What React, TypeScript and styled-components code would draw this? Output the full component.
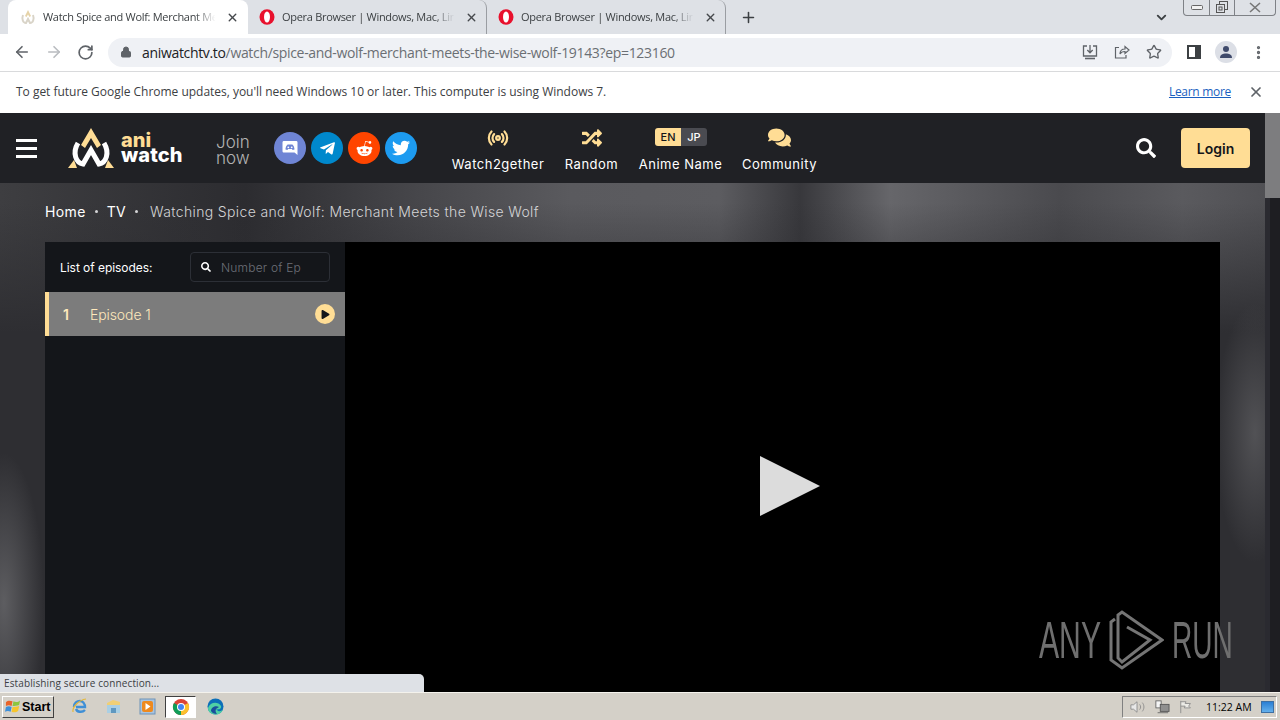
import styled, { createGlobalStyle } from 'styled-components';
import { ArrowLeft, ArrowRight, RotateCw, Lock, X, Plus, ChevronDown, Star, MoreVertical, Radio } from 'lucide-react';
import { FaTelegramPlane, FaRedditAlien, FaTwitter, FaSearch, FaRandom, FaComments, FaPlay } from 'react-icons/fa';

const chromeFont = `'Open Sans', 'Noto Sans', sans-serif`;
const siteFont = `'Inter', 'Open Sans', sans-serif`;

const GlobalStyle = createGlobalStyle`
  html, body {
    margin: 0;
    padding: 0;
    width: 1280px;
    height: 720px;
    overflow: hidden;
    background: #3b3b3f;
  }
  * { box-sizing: border-box; }
`;

function App() {
  return (
    <Screen>
      <GlobalStyle />
      <TabStrip>
        <Tab $active>
          <TabIcon viewBox="0 0 16 16">
            <path d="M8 1 L11 7 L9.500 8 L8 5.500 L6.500 8 L5 7 Z" fill="#e6d3a8" />
            <path d="M3 6 C1.500 10 3 14 6 14 L8 10 L10 14 C13 14 14.500 10 13 6" fill="none" stroke="#d9d4c8" strokeWidth="2" />
          </TabIcon>
          <TabTitle>Watch Spice and Wolf: Merchant Me</TabTitle>
          <TabClose><X size={13} strokeWidth={2.6} /></TabClose>
        </Tab>
        <Tab>
          <OperaIcon />
          <TabTitle>Opera Browser | Windows, Mac, Linu</TabTitle>
          <TabClose><X size={13} strokeWidth={2.6} /></TabClose>
        </Tab>
        <Tab>
          <OperaIcon />
          <TabTitle>Opera Browser | Windows, Mac, Linu</TabTitle>
          <TabClose><X size={13} strokeWidth={2.6} /></TabClose>
        </Tab>
        <NewTab><Plus size={17} strokeWidth={2.2} /></NewTab>
        <TabStripEnd>
          <ChevronDown size={15} strokeWidth={3} color="#3c4043" />
          <WindowButtons>
            <WindowButton $width={25}>
              <svg width="12" height="6" viewBox="0 0 12 6"><rect x="0.5" y="0.5" width="11" height="4" rx="1" fill="#f2f2f2" stroke="#666" /></svg>
            </WindowButton>
            <WindowButton $width={25}>
              <svg width="13" height="13" viewBox="0 0 13 13" fill="none" stroke="#555"><rect x="3.5" y="0.5" width="8" height="8" /><rect x="0.5" y="3.5" width="8" height="8" fill="#dee1e6" /><rect x="3" y="6" width="3" height="3" /></svg>
            </WindowButton>
            <WindowButton $width={41}>
              <svg width="12" height="11" viewBox="0 0 12 11" fill="none" stroke="#777" strokeWidth="1.6"><path d="M1 1 L11 10 M11 1 L1 10" /></svg>
            </WindowButton>
          </WindowButtons>
        </TabStripEnd>
      </TabStrip>

      <Toolbar>
        <NavIcons>
          <ArrowLeft size={18} strokeWidth={2.2} color="#5f6368" />
          <ArrowRight size={18} strokeWidth={2.2} color="#b9bcc0" />
          <RotateCw size={17} strokeWidth={2.4} color="#5f6368" />
        </NavIcons>
        <Omnibox>
          <Lock size={12} fill="#5f6368" color="#5f6368" />
          <Url>
            <b>aniwatchtv.to</b>/watch/spice-and-wolf-merchant-meets-the-wise-wolf-19143?ep=123160
          </Url>
          <OmniActions>
            <svg width="16" height="16" viewBox="0 0 16 16" fill="none" stroke="#5f6368" strokeWidth="1.3">
              <path d="M5 2 H1.5 V12 H14.5 V2 H11 M8 1 V8.5 M5.3 6 L8 8.8 L10.7 6" />
              <path d="M3 14.5 H13" strokeWidth="1.6" />
            </svg>
            <svg width="16" height="16" viewBox="0 0 16 16" fill="none" stroke="#5f6368" strokeWidth="1.2">
              <path d="M5 3.5 H1.5 V14 H12 V11 M6 10 C6 7 8 5 11 5 V2.5 L15 6 L11 9.5 V7.5 C9 7.5 7 8 6 10 Z" />
            </svg>
            <Star size={16} strokeWidth={2} color="#5f6368" />
          </OmniActions>
        </Omnibox>
        <ToolbarRight>
          <SidePanelIcon />
          <Avatar>
            <svg width="14" height="14" viewBox="0 0 14 14" fill="#3f4a6b">
              <circle cx="7" cy="4" r="3" />
              <path d="M1 13 C1 9.5 4 8.5 7 8.5 C10 8.5 13 9.5 13 13 Z" />
            </svg>
          </Avatar>
          <MoreVertical size={17} strokeWidth={2.6} color="#5f6368" />
        </ToolbarRight>
      </Toolbar>

      <InfoBar>
        <InfoText>To get future Google Chrome updates, you'll need Windows 10 or later. This computer is using Windows 7.</InfoText>
        <LearnMore>Learn more</LearnMore>
        <X size={16} strokeWidth={2.6} color="#5f6368" />
      </InfoBar>

      <Page>
        <PageColumn>
          <SiteHeader>
            <Burger><span /><span /><span /></Burger>
            <Logo>
              <svg width="46" height="40" viewBox="0 0 46 40">
                <path d="M23 0 L33 17 L29 20 L23 10 L17 20 L13 17 Z" fill="#ffdd95" />
                <path d="M0 40 L6 32 L9 40 Z M37 40 L40 32 L46 40 Z" fill="#ffdd95" />
                <path d="M10 15 C4 25 8 35 15 36 L23 22 L31 36 C38 35 42 25 36 15" fill="none" stroke="#fff" strokeWidth="5" />
              </svg>
              <LogoWords>
                <span>ani</span>
                <strong>watch</strong>
              </LogoWords>
            </Logo>
            <JoinNow>Join<br />now</JoinNow>
            <Socials>
              <Social $bg="#6f85d5">
                <svg width="16" height="16" viewBox="0 0 16 16">
                  <path d="M2 1 H14 C15 1 15.500 1.500 15.500 2.500 V15 L12.500 12.500 H2 C1 12.500 0.500 12 0.500 11 V2.500 C0.500 1.500 1 1 2 1 Z" fill="#fff" />
                  <path d="M3.500 9.500 C3.500 7 5 4.500 6 4.500 H10 C11 4.500 12.500 7 12.500 9.500 L10.500 10 L10 9 H6 L5.500 10 Z" fill="#6f85d5" />
                  <circle cx="6.300" cy="7.300" r="0.900" fill="#fff" />
                  <circle cx="9.700" cy="7.300" r="0.900" fill="#fff" />
                </svg>
              </Social>
              <Social $bg="#0088cc"><FaTelegramPlane size={17} /></Social>
              <Social $bg="#ff4500"><FaRedditAlien size={17} /></Social>
              <Social $bg="#1d9bf0"><FaTwitter size={18} /></Social>
            </Socials>
            <HeaderNav>
              <NavItem $width={92}><NavGlyph><Radio size={22} strokeWidth={2.4} /></NavGlyph>Watch2gether</NavItem>
              <NavItem $width={55}><NavGlyph><FaRandom size={20} /></NavGlyph>Random</NavItem>
              <NavItem $width={83}>
                <NavGlyph>
                  <LangSwitch><LangOption $on>EN</LangOption><LangOption>JP</LangOption></LangSwitch>
                </NavGlyph>
                Anime Name
              </NavItem>
              <NavItem $width={75}><NavGlyph><FaComments size={23} /></NavGlyph>Community</NavItem>
            </HeaderNav>
            <HeaderRight>
              <FaSearch size={20} color="#fff" />
              <LoginButton>Login</LoginButton>
            </HeaderRight>
          </SiteHeader>

          <Main>
            <Breadcrumb>
              <Crumb>Home</Crumb>
              <Dot />
              <Crumb>TV</Crumb>
              <Dot />
              <CrumbCurrent>Watching Spice and Wolf: Merchant Meets the Wise Wolf</CrumbCurrent>
            </Breadcrumb>
            <Player>
              <EpisodeList>
                <ListHead>
                  <ListTitle>List of episodes:</ListTitle>
                  <EpisodeSearch>
                    <FaSearch size={10} color="#fff" />
                    <span>Number of Ep</span>
                  </EpisodeSearch>
                </ListHead>
                <EpisodeRow>
                  <EpisodeNumber>1</EpisodeNumber>
                  <EpisodeName>Episode 1</EpisodeName>
                  <EpisodePlay><FaPlay size={9} color="#14161a" /></EpisodePlay>
                </EpisodeRow>
              </EpisodeList>
              <Video>
                <svg width="60" height="60" viewBox="0 0 60 60"><path d="M0 0 L60 30 L0 60 Z" fill="#dcdcdc" /></svg>
              </Video>
            </Player>
          </Main>
        </PageColumn>
        <ScrollBar><ScrollThumb /></ScrollBar>

        <Watermark>
          <WatermarkWord $scale={0.58}>ANY</WatermarkWord>
          <svg width="55" height="60" viewBox="0 0 55 60" fill="none" stroke="#757575" strokeWidth="3">
            <path d="M6 9 L2 12 V50 L13 58 L53 30 L13 2 L9 5 V48 L13 52 L41 30 L18 17" />
          </svg>
          <WatermarkWord $scale={0.54}>RUN</WatermarkWord>
        </Watermark>
        <StatusBubble>Establishing secure connection...</StatusBubble>
      </Page>

      <Taskbar>
        <StartButton>
          <svg width="16" height="15" viewBox="0 0 17 15">
            <path d="M1 3 C3 1 5 1 8 2 L7 7 C5 6 3 6 1 7 Z" fill="#e8632a" />
            <path d="M9 2 C11 3 14 3 16 1 L15 6 C13 7 10 7 8 7 Z" fill="#8cc63f" />
            <path d="M1 8 C3 7 5 7 7 8 L6 13 C4 12 2 12 0 13 Z" fill="#3c8fd9" />
            <path d="M8 8 C10 8 13 8 15 7 L14 12 C12 14 9 14 7 13 Z" fill="#f7c52c" />
          </svg>
          Start
        </StartButton>
        <QuickLaunch>
          <TaskIcon>
            <svg width="17" height="17" viewBox="0 0 17 17" fill="none">
              <path d="M3 9 C3 5 6 3 9 3 C12 3 14 6 14 9 H5 M5 11 C6 14 11 15 14 12" stroke="#3f8fd6" strokeWidth="2.4" />
              <path d="M2 14 C1 9 8 2 15 1" stroke="#e4b83a" strokeWidth="1.2" />
            </svg>
          </TaskIcon>
          <TaskIcon>
            <svg width="17" height="17" viewBox="0 0 17 17">
              <path d="M2 5 L8 2 L15 4 V7 H2 Z" fill="#f0cf74" />
              <rect x="2" y="7" width="13" height="8" fill="#a9cfe4" />
              <rect x="6" y="10" width="5" height="5" fill="#5f98c0" />
            </svg>
          </TaskIcon>
          <TaskIcon>
            <svg width="17" height="17" viewBox="0 0 17 17">
              <rect x="1" y="1" width="15" height="15" fill="#a8c4e0" stroke="#6e93b8" />
              <rect x="3" y="3" width="11" height="11" rx="2" fill="#ee8a1f" />
              <path d="M6.5 5 L11.5 8.5 L6.5 12 Z" fill="#fff" />
            </svg>
          </TaskIcon>
          <ActiveTask>
            <svg width="18" height="18" viewBox="0 0 18 18">
              <circle cx="9" cy="9" r="8" fill="#db4437" />
              <path d="M9 9 L16 5 A8 8 0 0 1 9 17 Z" fill="#fbc02d" />
              <path d="M9 9 L9 17 A8 8 0 0 1 2 5 Z" fill="#0f9d58" />
              <circle cx="9" cy="9" r="4" fill="#fff" />
              <circle cx="9" cy="9" r="3" fill="#4285f4" />
            </svg>
          </ActiveTask>
          <TaskIcon>
            <svg width="17" height="17" viewBox="0 0 17 17">
              <circle cx="8.5" cy="8.5" r="8" fill="#0c6fb8" />
              <path d="M1 10 C3 4 11 3 14 8 C15 11 11 12 9 11 C12 15 15 13 16 11 C15 15 11 17 8 16.5 C4 16 1 14 1 10 Z" fill="#4fd1a5" />
              <path d="M4 13 C4 9 9 7 12 9 L9 11 C8 13 9 15 10 16 C7 16 5 15 4 13 Z" fill="#1a4f9c" />
            </svg>
          </TaskIcon>
        </QuickLaunch>
        <Tray>
          <svg width="18" height="16" viewBox="0 0 18 16" fill="none" stroke="#8a8a8a">
            <path d="M1 5.5 H4 L8 2 V14 L4 10.5 H1 Z" fill="#e8e8e8" />
            <path d="M11 5 C12.500 7 12.500 9 11 11 M14 3 C16.500 6 16.500 10 14 13" />
          </svg>
          <svg width="17" height="16" viewBox="0 0 17 16">
            <rect x="1" y="1" width="6" height="8" fill="#f5f5f5" stroke="#666" />
            <rect x="6" y="5" width="10" height="8" fill="#8f8f8f" stroke="#555" />
            <path d="M3 14.500 H15" stroke="#666" />
          </svg>
          <svg width="14" height="16" viewBox="0 0 14 16" fill="#ecebe6" stroke="#8a8a8a">
            <path d="M2 1 V15 M2 2 H8 L7 4 H13 L11 7 L13 9 H6 L7 7 H2" />
          </svg>
          <Clock>11:22 AM</Clock>
          <ShowDesktop />
        </Tray>
      </Taskbar>
    </Screen>
  );
}

export default App;

function OperaIcon() {
  return (
    <TabIcon viewBox="0 0 16 16">
      <ellipse cx="8" cy="8" rx="7.500" ry="7.800" fill="#e8112d" />
      <ellipse cx="8" cy="8" rx="3" ry="5.600" fill="#fff" />
    </TabIcon>
  );
}

function SidePanelIcon() {
  return (
    <svg width="14" height="14" viewBox="0 0 14 14">
      <rect x="0" y="0" width="14" height="14" fill="#3c4043" />
      <rect x="2" y="2" width="6" height="10" fill="#fff" />
    </svg>
  );
}

const Screen = styled.div`
  width: 1280px;
  height: 720px;
  display: flex;
  flex-direction: column;
  overflow: hidden;
  font-family: ${chromeFont};
`;

const TabStrip = styled.div`
  height: 34px;
  flex: none;
  display: flex;
  align-items: flex-end;
  padding-left: 8px;
  background: #dee1e6;
`;

const Tab = styled.div<{ $active?: boolean }>`
  width: ${(p) => (p.$active ? '240px' : '239px')};
  height: 34px;
  padding: ${(p) => (p.$active ? '0 9px 0 12px' : '0 8px 0 11px')};
  display: flex;
  align-items: center;
  gap: 7px;
  border-radius: 8px 8px 0 0;
  background: ${(p) => (p.$active ? '#fff' : 'transparent')};
  border-right: ${(p) => (p.$active ? 'none' : '1px solid #9a9da2')};
  background-clip: padding-box;
`;

const TabIcon = styled.svg`
  width: 16px;
  height: 16px;
  flex: none;
`;

const TabTitle = styled.span`
  flex: 1;
  min-width: 0;
  margin-top: -2px;
  white-space: nowrap;
  font-size: 11px;
  letter-spacing: -0.3px;
  color: #3c4043;
  -webkit-mask-image: linear-gradient(to right, #000 86%, transparent 98%);
  mask-image: linear-gradient(to right, #000 86%, transparent 98%);
`;

const TabClose = styled.span`
  display: flex;
  color: #45484c;
`;

const NewTab = styled.div`
  display: flex;
  margin-left: 14px;
  height: 34px;
  align-items: center;
  color: #3c4043;
`;

const TabStripEnd = styled.div`
  margin-left: auto;
  height: 34px;
  display: flex;
  align-items: center;
  gap: 14px;
  padding-right: 4px;
`;

const WindowButtons = styled.div`
  display: flex;
  align-self: flex-start;
  height: 16px;
  border: 1px solid #7e8186;
  border-top: none;
  border-radius: 0 0 4px 4px;
`;

const WindowButton = styled.div<{ $width: number }>`
  width: ${(p) => p.$width}px;
  display: flex;
  align-items: center;
  justify-content: center;
  & + & {
    border-left: 1px solid #7e8186;
  }
`;

const Toolbar = styled.div`
  height: 38px;
  flex: none;
  display: flex;
  align-items: center;
  padding: 0 13px 1px 13px;
  background: #fff;
  border-bottom: 1px solid #d9dadc;
`;

const NavIcons = styled.div`
  display: flex;
  align-items: center;
  gap: 14px;
  margin-right: 13px;
`;

const Omnibox = styled.div`
  width: 1064px;
  height: 29px;
  flex: none;
  display: flex;
  align-items: center;
  gap: 10px;
  padding: 0 10px 0 12px;
  border-radius: 15px;
  background: #eff1f5;
  margin-left: 1px;
  margin-right: 15px;
`;

const Url = styled.span`
  flex: 1;
  white-space: nowrap;
  font-size: 14px;
  letter-spacing: -0.33px;
  color: #6b6f74;
  b {
    font-weight: 400;
    color: #202124;
  }
`;

const OmniActions = styled.div`
  display: flex;
  align-items: center;
  gap: 16px;
`;

const ToolbarRight = styled.div`
  display: flex;
  align-items: center;
  gap: 14px;
  svg:last-child {
    margin-left: -1px;
  }
`;

const Avatar = styled.div`
  width: 22px;
  height: 22px;
  display: flex;
  align-items: center;
  justify-content: center;
  border-radius: 50%;
  background: #dcdfe6;
`;

const InfoBar = styled.div`
  height: 41px;
  flex: none;
  display: flex;
  align-items: center;
  padding: 0 16px 2px;
  background: #fff;
`;

const InfoText = styled.span`
  flex: 1;
  font-size: 12px;
  letter-spacing: -0.02px;
  color: #3c4043;
`;

const LearnMore = styled.a`
  margin-right: 17px;
  font-size: 12px;
  letter-spacing: -0.3px;
  color: #1a5fc0;
  text-decoration: underline;
`;

const Page = styled.div`
  position: relative;
  flex: 1;
  min-height: 0;
  display: flex;
  overflow: hidden;
  background: #2e2e32;
`;

const PageColumn = styled.div`
  flex: 1;
  min-width: 0;
  display: flex;
  flex-direction: column;
  background:
    radial-gradient(ellipse 40px 150px at 4px 490px, rgba(125, 125, 128, 0.6), transparent),
    radial-gradient(ellipse 40px 130px at 1255px 320px, rgba(125, 125, 128, 0.45), transparent),
    linear-gradient(to bottom, transparent 90px, #2e2e32 220px),
    linear-gradient(to right, #3e3e41 0, #2c2c30 245px, #47474b 420px, #5a5a5e 570px, #5c5c60 720px, #38383c 800px, #66666a 890px, #4a4a4e 1060px, #5a5a5e 1183px, #505054 1265px);
`;

const SiteHeader = styled.header`
  height: 70px;
  flex: none;
  display: flex;
  align-items: center;
  padding: 0 15px 0 16px;
  background: #202125;
  font-family: ${siteFont};
`;

const Burger = styled.div`
  width: 21px;
  display: flex;
  flex-direction: column;
  gap: 5px;
  margin-right: 31px;
  span {
    height: 3px;
    background: #fff;
  }
`;

const Logo = styled.div`
  width: 148px;
  flex: none;
  display: flex;
  align-items: center;
  gap: 7px;
`;

const LogoWords = styled.div`
  display: flex;
  flex-direction: column;
  font-family: 'Inter', sans-serif;
  font-weight: 800;
  font-size: 20px;
  line-height: 15px;
  span { color: #ffdd95; }
  strong { color: #fff; font-weight: 800; letter-spacing: 0.1px; }
`;

const JoinNow = styled.div`
  width: 58px;
  flex: none;
  padding-top: 3px;
  font-size: 17px;
  font-weight: 300;
  line-height: 16px;
  color: #b3b3b3;
`;

const Socials = styled.div`
  display: flex;
  gap: 5px;
  margin-right: 35px;
`;

const Social = styled.div<{ $bg: string }>`
  width: 32px;
  height: 32px;
  display: flex;
  align-items: center;
  justify-content: center;
  border-radius: 50%;
  color: #fff;
  background: ${(p) => p.$bg};
`;

const HeaderNav = styled.nav`
  display: flex;
  gap: 20px;
`;

const NavItem = styled.div<{ $width: number }>`
  width: ${(p) => p.$width}px;
  display: flex;
  flex-direction: column;
  align-items: center;
  gap: 8px;
  white-space: nowrap;
  font-size: 13px;
  font-weight: 400;
  letter-spacing: 0.5px;
  color: #fff;
`;

const NavGlyph = styled.div`
  height: 20px;
  margin-top: 3px;
  display: flex;
  align-items: center;
  color: #ffdd95;
`;

const LangSwitch = styled.div`
  display: flex;
  margin: -2px 0 0 1px;
  overflow: hidden;
  border-radius: 3px;
`;

const LangOption = styled.span<{ $on?: boolean }>`
  width: 26px;
  height: 18px;
  display: flex;
  align-items: center;
  justify-content: center;
  font-size: 11px;
  font-weight: 500;
  letter-spacing: 0;
  color: ${(p) => (p.$on ? '#14161a' : '#fff')};
  background: ${(p) => (p.$on ? '#ffdd95' : '#4a4b51')};
`;

const HeaderRight = styled.div`
  margin-left: auto;
  display: flex;
  align-items: center;
  gap: 25px;
`;

const LoginButton = styled.button`
  width: 69px;
  height: 40px;
  border: none;
  border-radius: 4px;
  background: #ffdd95;
  color: #14161a;
  font-family: ${siteFont};
  font-size: 14px;
  font-weight: 600;
`;

const Main = styled.main`
  flex: 1;
  min-height: 0;
  padding: 0 45px;
  font-family: ${siteFont};
`;

const ScrollBar = styled.div`
  width: 15px;
  flex: none;
  background: linear-gradient(to right, #2a2a30 5px, #1e1e22 5px);
`;

const ScrollThumb = styled.div`
  height: 85px;
  background: #7d7d7f;
`;

const Breadcrumb = styled.div`
  height: 59px;
  padding-bottom: 3px;
  display: flex;
  align-items: center;
  font-size: 14px;
  letter-spacing: 0.36px;
  color: #fff;
`;

const Crumb = styled.span`
  color: #fff;
`;

const CrumbCurrent = styled.span`
  margin-left: 3px;
  font-weight: 300;
  color: #d4d4d6;
`;

const Dot = styled.i`
  width: 3px;
  height: 3px;
  margin: 0 9px;
  border-radius: 50%;
  background: #d4d4d6;
`;

const Player = styled.div`
  display: flex;
  height: 450px;
`;

const EpisodeList = styled.aside`
  width: 300px;
  flex: none;
  background: #14161a;
`;

const ListHead = styled.div`
  height: 50px;
  display: flex;
  align-items: center;
  justify-content: space-between;
  padding: 0 15px;
`;

const ListTitle = styled.span`
  font-size: 12px;
  letter-spacing: -0.05px;
  color: #fff;
`;

const EpisodeSearch = styled.div`
  width: 140px;
  height: 30px;
  display: flex;
  align-items: center;
  gap: 10px;
  padding-left: 10px;
  border: 1px solid #2c2f36;
  border-radius: 4px;
  font-size: 12px;
  font-weight: 300;
  letter-spacing: 0.2px;
  color: #6d7078;
`;

const EpisodeRow = styled.div`
  height: 44px;
  display: flex;
  align-items: center;
  padding: 0 10px 0 14px;
  border-left: 4px solid #ffdd95;
  background: #7c7c7c;
`;

const EpisodeNumber = styled.span`
  width: 27px;
  font-size: 14px;
  font-weight: 600;
  color: #ffe9bc;
`;

const EpisodeName = styled.span`
  flex: 1;
  font-size: 14px;
  font-weight: 300;
  letter-spacing: -0.1px;
  color: #ffe9bc;
`;

const EpisodePlay = styled.div`
  width: 20px;
  height: 20px;
  display: flex;
  align-items: center;
  justify-content: center;
  padding-left: 1px;
  border-radius: 50%;
  background: #ffdd95;
`;

const Video = styled.div`
  flex: 1;
  display: flex;
  align-items: center;
  justify-content: center;
  background: #000;
  svg {
    margin-top: 38px;
    margin-left: 15px;
  }
`;

const Watermark = styled.div`
  position: absolute;
  left: 1039px;
  top: 497px;
  display: flex;
  align-items: center;
  gap: 8px;
  font-family: 'Liberation Sans', sans-serif;
  font-size: 52px;
  line-height: 60px;
  color: #6f6f6f;
`;

const WatermarkWord = styled.span<{ $scale: number }>`
  width: 62px;
  display: inline-block;
  transform: scaleX(${(p) => p.$scale});
  transform-origin: left center;
  white-space: nowrap;
`;

const StatusBubble = styled.div`
  position: absolute;
  left: 0;
  bottom: 0;
  width: 424px;
  height: 18px;
  padding: 2px 4px;
  border-radius: 0 5px 0 0;
  background: #dee1e6;
  color: #3c4043;
  font-size: 10px;
  letter-spacing: 0.12px;
  line-height: 14px;
`;

const Taskbar = styled.div`
  height: 28px;
  flex: none;
  display: flex;
  align-items: center;
  padding: 0 3px 0 2px;
  background: #d4d0c8;
  border-top: 1px solid #f4f2ec;
`;

const StartButton = styled.div`
  width: 52px;
  height: 22px;
  display: flex;
  align-items: center;
  gap: 1px;
  padding-left: 2px;
  border: 1px solid;
  border-color: #fff #404040 #404040 #fff;
  font-family: 'Liberation Sans', sans-serif;
  font-size: 12.5px;
  font-weight: 700;
  color: #000;
`;

const QuickLaunch = styled.div`
  display: flex;
  align-items: center;
  margin-left: 8px;
`;

const TaskIcon = styled.div`
  width: 34px;
  height: 22px;
  display: flex;
  align-items: center;
  justify-content: center;
`;

const ActiveTask = styled(TaskIcon)`
  width: 31px;
  margin: 0 2px 0 1px;
  background: #fff;
  border: 1px solid;
  border-color: #404040 #fff #fff #404040;
`;

const Tray = styled.div`
  margin-left: auto;
  width: 155px;
  height: 22px;
  display: flex;
  align-items: center;
  gap: 9px;
  padding: 0 2px 0 7px;
  border: 1px solid;
  border-color: #808080 #fff #fff #808080;
`;

const Clock = styled.span`
  margin-left: 6px;
  font-family: 'Open Sans', sans-serif;
  font-size: 10.5px;
  white-space: nowrap;
  color: #000;
`;

const ShowDesktop = styled.div`
  width: 15px;
  height: 12px;
  margin-left: auto;
  background: linear-gradient(#2a7fd4, #64b0ec);
  border: 1px solid #3d6fa3;
`;
